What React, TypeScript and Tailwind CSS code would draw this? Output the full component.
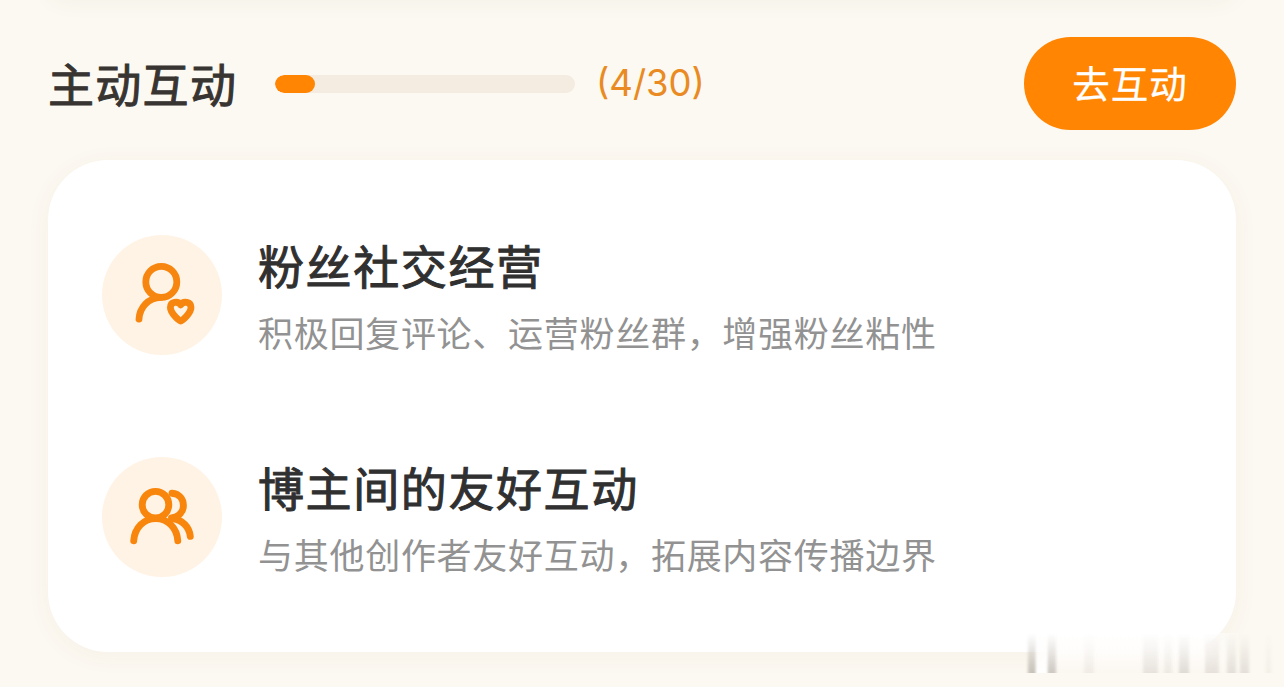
import type { ReactNode } from "react";

function FanIcon() {
  return (
    <svg width="120" height="120" viewBox="0 0 120 120" fill="none" stroke="#f6860f" strokeWidth="6.8" strokeLinecap="round" strokeLinejoin="round">
      <circle cx="59.3" cy="46.9" r="15.5" />
      <path d="M37 84.2C37.6 72.5 46 63 59 62.4" />
      <path d="M78.7 86C77 86 68.4 78 68.4 72.6C68.4 66.6 76 65.6 78.7 69.9C81.4 65.6 89 66.6 89 72.6C89 78 80.4 86 78.7 86Z" />
    </svg>
  );
}

function FriendsIcon() {
  return (
    <svg width="120" height="120" viewBox="0 0 120 120" fill="none" stroke="#f9860c" strokeWidth="6.9" strokeLinecap="round" strokeLinejoin="round">
      <circle cx="53.5" cy="47.7" r="13.3" />
      <path d="M31.7 83.8C32.6 71 41.5 61.6 53.7 61.6S75 71 75.8 83.8" />
      <path d="M70 36.3C77.5 37 81.4 42.3 81.4 48.5C81.4 55 77 59.7 69.5 61" />
      <path d="M71 61.5C80.5 63 87.3 70 88.3 79.3" />
    </svg>
  );
}

function Item({ icon, title, text }: { icon: ReactNode; title: string; text: string }) {
  return (
    <div className="flex h-[120px] gap-9">
      <div className="h-[120px] w-[120px] shrink-0 rounded-full bg-[#fff3e5]">{icon}</div>
      <div className="flex flex-col whitespace-nowrap">
        <h2 className="h-16 text-[46px] leading-[58px] tracking-[1.6px] text-[#303030] [-webkit-text-stroke:1px_#303030]">{title}</h2>
        <p className="h-14 text-[35px] leading-[66px] tracking-[0.72px] text-[#929292]">{text}</p>
      </div>
    </div>
  );
}

const streaks = [
  { left: 12, width: 9, color: "rgba(60,50,40,.28)" },
  { left: 31, width: 9, color: "rgba(60,50,40,.24)" },
  { left: 20, width: 11, color: "#ffffff" },
  { left: 68, width: 10, color: "rgba(60,50,40,.06)" },
  { left: 127, width: 15, color: "rgba(60,50,40,.1)" },
  { left: 148, width: 8, color: "rgba(60,50,40,.07)" },
  { left: 163, width: 10, color: "rgba(60,50,40,.14)" },
  { left: 189, width: 14, color: "rgba(60,50,40,.11)" },
  { left: 211, width: 9, color: "rgba(60,50,40,.12)" },
  { left: 224, width: 9, color: "rgba(60,50,40,.12)" },
  { left: 250, width: 5, color: "rgba(60,50,40,.05)" },
];

export default function App() {
  return (
    <main className="relative h-[687px] w-[1284px] overflow-hidden bg-[#fcf9f2] px-12 pt-[37px] font-['Noto_Sans_CJK_SC',sans-serif]">
      <div className="absolute -top-10 left-12 h-9 w-[1188px] rounded-[60px] shadow-[0_4px_24px_rgba(90,80,50,0.06)]" />
      <header className="flex h-[93px] items-center">
        <h1 className="w-[227px] whitespace-nowrap pb-[3px] text-[46px] leading-[88px] tracking-[1.3px] text-[#383431] [-webkit-text-stroke:1px_#383431]">主动互动</h1>
        <div className="h-[18px] w-[300px] overflow-hidden rounded-full bg-[#f4ebe1]">
          <div className="h-full w-10 rounded-full bg-[#ff8502]" />
        </div>
        <span className="ml-[21px] pb-0.5 font-[Inter,sans-serif] text-[36.5px] leading-[88px] text-[#e98b22]">(4/30)</span>
        <button className="ml-auto h-[93px] w-[212px] rounded-full bg-[#ff8502] pb-1 text-[37.5px] leading-[89px] tracking-[1px] text-white [-webkit-text-stroke:0.3px_#fff]">去互动</button>
      </header>
      <section className="mt-[30px] flex h-[492px] flex-col gap-[102px] rounded-[60px] bg-white pt-[75px] pl-[54px] shadow-[0_4px_24px_rgba(130,70,40,0.05)]">
        <Item icon={<FanIcon />} title="粉丝社交经营" text="积极回复评论、运营粉丝群，增强粉丝粘性" />
        <Item icon={<FriendsIcon />} title="博主间的友好互动" text="与其他创作者友好互动，拓展内容传播边界" />
      </section>
      <div className="absolute top-[633px] left-[1016px] h-10 w-[268px] overflow-hidden">
        <div className="absolute inset-0 bg-linear-to-b from-white via-[#fffdfb] to-[#fbf7f1] [mask-image:linear-gradient(to_right,transparent_3%,black_12%,black_68%,transparent_85%)]" />
        <div className="absolute inset-0 [mask-image:linear-gradient(transparent,black)]">
          {streaks.map((s) => (
            <div
              key={s.left}
              className="absolute top-0 h-12 blur-[1.5px]"
              style={{ left: s.left, width: s.width, backgroundColor: s.color }}
            />
          ))}
        </div>
      </div>
    </main>
  );
}
